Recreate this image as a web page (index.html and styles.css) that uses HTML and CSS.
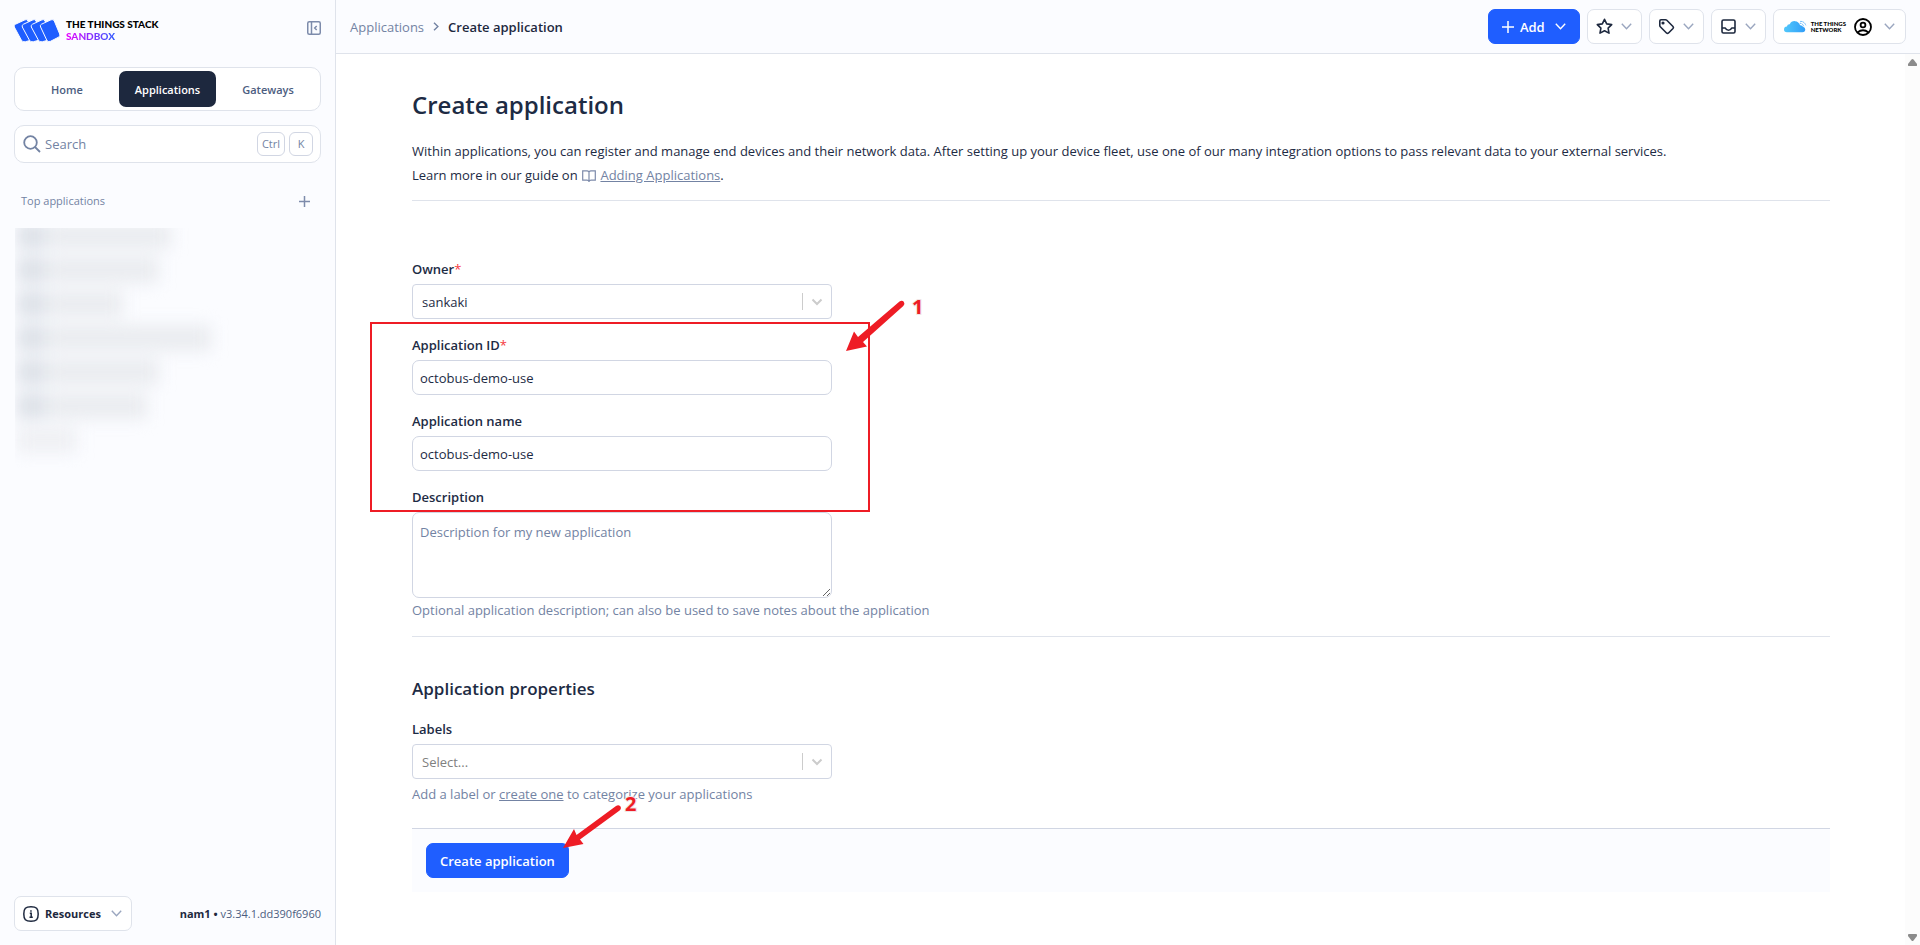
FILE: index.html
```html
<!DOCTYPE html>
<html lang="en">
<head>
    <meta charset="UTF-8">
    <meta name="viewport" content="width=device-width, initial-scale=1.0">
    <title>Create application - The Things Stack Sandbox</title>
    <link rel="stylesheet" href="styles.css">
</head>
<body>
<aside class="sidebar">
    <div class="sidebar-head">
        <a class="brand" href="#">
            <svg width="46" height="23" viewBox="0 0 46 23">
                <g fill="#1f5eff" stroke="#fbfcff" stroke-width="1">
                    <path d="M1.5 5.2 11 .8Q13 0 14 2L20.800 17.500Q21.500 19.500 19.500 20.500L11.500 22.700Q8.500 23.500 7.300 21L.3 8Q-.5 6.200 1.500 5.200Z"/>
                    <path d="M9.500 5.200 19 .8Q21 0 22 2L28.800 17.500Q29.500 19.500 27.500 20.500L19.500 22.700Q16.500 23.500 15.300 21L8.300 8Q7.500 6.200 9.500 5.200Z"/>
                    <path d="M18.500 5.200 28 .8Q30 0 31 2L37.800 17.500Q38.500 19.500 36.500 20.500L28.500 22.700Q25.500 23.500 24.300 21L17.300 8Q16.500 6.200 18.500 5.200Z"/>
                    <path d="M27.500 5.200 37 .8Q39.300 0 40.300 2L45.700 15Q46.500 17.200 44.500 18.200L36.500 22.300Q33.800 23.500 32.700 21L26.600 8Q25.500 6.200 27.500 5.200Z"/>
                </g>
            </svg>
            <span class="brand-text">
                <span>THE THINGS STACK</span>
                <span class="brand-plan">SANDBOX</span>
            </span>
        </a>
        <button class="icon-button" aria-label="Collapse sidebar">
            <svg width="14" height="14" viewBox="0 0 14 14" fill="none" stroke="#7d8bab" stroke-width="1.500">
                <rect x=".75" y=".75" width="12.500" height="12.500" rx="1.500"/>
                <path d="M4.500 1v12M9.700 5 7.700 7l2 2"/>
            </svg>
        </button>
    </div>

    <nav class="tabs">
        <a href="#">Home</a>
        <a href="#" class="active">Applications</a>
        <a href="#">Gateways</a>
    </nav>

    <div class="search">
        <svg width="18" height="18" viewBox="0 0 18 18" fill="none" stroke="#7383a3" stroke-width="1.800">
            <circle cx="7.500" cy="7.500" r="6.300"/>
            <path d="m12 12 5 5"/>
        </svg>
        <input type="search" placeholder="Search" aria-label="Search">
        <kbd>Ctrl</kbd>
        <kbd>K</kbd>
    </div>

    <div class="section-title">
        <span>Top applications</span>
        <button class="icon-button" aria-label="Add application">
            <svg width="11" height="11" viewBox="0 0 11 11" stroke="#7d8bab" stroke-width="1.500"><path d="M5.500 0v11M0 5.500h11"/></svg>
        </button>
    </div>

    <!-- application names are hidden -->
    <div class="top-apps">
        <div class="app-list">
            <div class="app-row"><i></i><b style="width: 122px"></b></div>
            <div class="app-row"><i></i><b style="width: 110px"></b></div>
            <div class="app-row"><i></i><b style="width: 74px"></b></div>
            <div class="app-row"><i></i><b style="width: 162px"></b></div>
            <div class="app-row"><i></i><b style="width: 110px"></b></div>
            <div class="app-row"><i></i><b style="width: 98px"></b></div>
            <div class="app-row more"><b style="width: 60px"></b></div>
        </div>
    </div>

    <div class="sidebar-foot">
        <button class="button">
            <svg width="16" height="16" viewBox="0 0 16 16" fill="none" stroke="#1d283e" stroke-width="1.500">
                <path d="M8 .8C13.500.8 15.200 2.500 15.200 8S13.500 15.200 8 15.200.8 13.500.8 8 2.500.8 8 .8Z"/>
                <path d="M6.800 7.300H8.200V11M6.500 11.200h3.300M7.200 4.900h1.500"/>
            </svg>
            <span>Resources</span>
            <svg class="chevron" width="11" height="7" viewBox="0 0 11 7"><path d="m.8.8 4.700 4.900L10.200.8"/></svg>
        </button>
        <p class="version"><strong>nam1 •</strong> v3.34.1.dd390f6960</p>
    </div>
</aside>

<div class="page">
    <header class="header">
        <nav class="breadcrumbs">
            <a href="#">Applications</a>
            <svg width="6" height="9" viewBox="0 0 6 9" fill="none" stroke="#7383a3" stroke-width="1.400"><path d="m1 .7 3.900 3.800L1 8.300"/></svg>
            <span>Create application</span>
        </nav>
        <div class="actions">
            <button class="button primary">
                <svg width="12" height="12" viewBox="0 0 12 12" stroke="#fff" stroke-width="1.500"><path d="M6 0v12M0 6h12"/></svg>
                <span>Add</span>
                <svg class="chevron" width="11" height="7" viewBox="0 0 11 7"><path d="m.8.8 4.700 4.900L10.200.8"/></svg>
            </button>
            <button class="button compact" aria-label="Bookmarks">
                <svg width="17" height="17" viewBox="0 0 17 17" fill="none" stroke="#1d283e" stroke-width="1.600" stroke-linejoin="round"><path d="m8.500 1.300 2.200 4.600 5 .7-3.600 3.500.9 5-4.500-2.400L4 15.100l.9-5L1.300 6.600l5-.7Z"/></svg>
                <svg class="chevron" width="11" height="7" viewBox="0 0 11 7"><path d="m.8.8 4.700 4.900L10.200.8"/></svg>
            </button>
            <button class="button compact" aria-label="Tags">
                <svg width="17" height="17" viewBox="0 0 17 17" fill="none" stroke="#1d283e" stroke-width="1.600" stroke-linejoin="round">
                    <path d="M1.800 3v4.500q0 .8.500 1.300l6.200 6.200q1 .9 2 0l4.500-4.500q.9-1 0-2L8.800 2.300q-.5-.5-1.300-.5H3Q1.800 1.800 1.800 3Z"/>
                    <circle cx="5" cy="5" r=".8" fill="#1d283e"/>
                </svg>
                <svg class="chevron" width="11" height="7" viewBox="0 0 11 7"><path d="m.8.8 4.700 4.900L10.200.8"/></svg>
            </button>
            <button class="button compact" aria-label="Inbox">
                <svg width="17" height="17" viewBox="0 0 17 17" fill="none" stroke="#1d283e" stroke-width="1.600" stroke-linejoin="round">
                    <rect x="2" y="2" width="13" height="13" rx="1.500"/>
                    <path d="M2 10h3.300q1 2.300 3.200 2.300t3.200-2.300H15"/>
                </svg>
                <svg class="chevron" width="11" height="7" viewBox="0 0 11 7"><path d="m.8.8 4.700 4.900L10.200.8"/></svg>
            </button>
            <button class="button compact profile" aria-label="Profile">
                <svg width="23" height="13" viewBox="0 0 24 13">
                    <defs>
                        <linearGradient id="cloud" x1="0" x2="1"><stop offset="0" stop-color="#52c8fb"/><stop offset="1" stop-color="#309df8"/></linearGradient>
                    </defs>
                    <path fill="url(#cloud)" d="M3 12.500Q0 12.200 0 9.500 0 6.800 3 6.500 3.500 4 6 4.200 7.500.7 11.500.9q4 .2 5.300 4.300 2.200-.2 3 1.600 2.400.4 2.400 2.900 0 2.600-3 2.800Z"/>
                    <path fill="none" stroke="#309df8" stroke-width=".9" stroke-dasharray="1.500 .7" d="M16.500 3.200q2.800-.3 4 3M17 1.200q4-.3 5.800 4"/>
                </svg>
                <span class="network-name">THE THINGS<br>NETWORK</span>
                <svg class="avatar" width="18" height="18" viewBox="0 0 18 18" fill="none" stroke="#000" stroke-width="1.800">
                    <circle cx="9" cy="9" r="8"/>
                    <circle cx="9" cy="7" r="2.400"/>
                    <path d="M3.500 14.500q5.500-4.500 11 0"/>
                </svg>
                <svg class="chevron" width="11" height="7" viewBox="0 0 11 7"><path d="m.8.8 4.700 4.900L10.200.8"/></svg>
            </button>
        </div>
    </header>

    <div class="scroll-area">
        <main class="content">
            <h1>Create application</h1>
            <p class="intro">
                Within applications, you can register and manage end devices and their network data. After setting up your device fleet, use one of our many integration options to pass relevant data to your external services.<br>
                Learn more in our guide on
                <svg width="14" height="12" viewBox="0 0 14 12" fill="none" stroke="#7d8bab" stroke-width="1.200"><path d="M7 2Q6.300.8 5 .8H.7v9.400H5q1.500 0 2 1.200.500-1.200 2-1.200h4.300V.8H9Q7.700.8 7 2Zm0 0v9"/></svg>
                <a href="#">Adding Applications</a>.
            </p>
            <hr>

            <form class="form">
                <div class="field">
                    <label for="owner">Owner<span class="required">*</span></label>
                    <div class="select">
                        <select id="owner">
                            <option>sankaki</option>
                        </select>
                        <span class="select-arrow"><svg width="12" height="8" viewBox="0 0 12 8"><path d="m1.500 1.500 4.500 4.500 4.500-4.500"/></svg></span>
                    </div>
                </div>
                <div class="field">
                    <label for="app-id">Application ID<span class="required">*</span></label>
                    <input type="text" id="app-id" value="octobus-demo-use">
                </div>
                <div class="field">
                    <label for="app-name">Application name</label>
                    <input type="text" id="app-name" value="octobus-demo-use">
                </div>
                <div class="field">
                    <label for="description">Description</label>
                    <textarea id="description" placeholder="Description for my new application"></textarea>
                    <p class="hint">Optional application description; can also be used to save notes about the application</p>
                </div>
                <hr>

                <h2>Application properties</h2>
                <div class="field labels">
                    <label for="labels">Labels</label>
                    <div class="select empty">
                        <select id="labels">
                            <option>Select...</option>
                        </select>
                        <span class="select-arrow"><svg width="12" height="8" viewBox="0 0 12 8"><path d="m1.500 1.500 4.500 4.500 4.500-4.500"/></svg></span>
                    </div>
                    <p class="hint">Add a label or <a href="#">create one</a> to categorize your applications</p>
                </div>

                <div class="submit-bar">
                    <button type="submit" class="button primary">Create application</button>
                </div>
            </form>

            <!-- steps drawn over the form -->
            <svg class="steps" width="560" height="560" viewBox="0 0 560 560">
                <rect x="11" y="34" width="498" height="188" fill="none" stroke="#ee1c25" stroke-width="2"/>
                <g fill="#ee1c25">
                    <path d="m486 62 8-19.500 4 5.500L539.500 12.500q2.500-1.500 4.300.3 1.500 2.200-.5 4.200L503 53l4 4.500Z"/>
                    <path d="m203 559 11-19 2.500 6L256 517q2.500-1.500 4.300.3 1.500 2.200-.7 4.200L220 550.500l3.500 4.500Z"/>
                    <text x="552" y="25">1</text>
                    <text x="265" y="522">2</text>
                </g>
            </svg>
        </main>
        <div class="scrollbar">
            <svg width="9" height="7" viewBox="0 0 9 7"><path d="M3.500.5Q4.500-.5 5.500.5L9 5q.5 2-1 2H1Q-.5 7 0 5Z"/></svg>
            <svg width="9" height="7" viewBox="0 0 9 7"><path d="M3.500 6.500q1 1 2 0L9 2q.5-2-1-2H1Q-.5 0 0 2Z"/></svg>
        </div>
    </div>
</div>
</body>
</html>
```
FILE: styles.css
```css
:root {
    --blue: #1f5eff;
    --dark: #1d283e;
    --text: #1d2b44;
    --muted: #7383a3;
    --panel: #fbfcff;
    --line: #dfe3eb;
    --input-line: #d1d6e3;
}

* {
    margin: 0;
    padding: 0;
    box-sizing: border-box;
}

body {
    display: flex;
    height: 100vh;
    overflow: hidden;
    background: #fff;
    color: var(--text);
    font-family: "Segoe UI", "Open Sans", "Noto Sans", sans-serif;
    font-size: 13px;
    line-height: 20px;
}

svg {
    flex-shrink: 0;
}

button, input, select, textarea {
    font: inherit;
    color: inherit;
}

a {
    color: var(--muted);
}

hr {
    border: none;
    border-top: 1px solid var(--line);
}

/* sidebar */
.sidebar {
    display: flex;
    flex-direction: column;
    flex-shrink: 0;
    width: 336px;
    padding: 14px;
    background: var(--panel);
    border-right: 1px solid var(--line);
}

.sidebar-head {
    display: flex;
    justify-content: space-between;
    align-items: center;
    height: 28px;
    margin-bottom: 25px;
}

.brand {
    display: flex;
    align-items: center;
    gap: 6px;
    margin-top: 4px;
    color: #000;
    text-decoration: none;
}

.brand-text {
    display: flex;
    flex-direction: column;
    font-family: Lato, sans-serif;
    font-size: 10px;
    font-weight: 900;
    line-height: 12px;
}

.brand-plan {
    align-self: flex-start;
    background: linear-gradient(90deg, #e800ff, #2f5bff);
    background-clip: text;
    -webkit-background-clip: text;
    color: transparent;
}

.icon-button {
    display: flex;
    background: none;
    border: none;
    cursor: pointer;
}

.tabs {
    display: grid;
    grid-template-columns: 1fr 97px 1fr;
    gap: 3px;
    height: 44px;
    padding: 3px;
    background: #fff;
    border: 1px solid var(--line);
    border-radius: 10px;
}

.tabs a {
    display: flex;
    align-items: center;
    justify-content: center;
    padding-top: 1px;
    border-radius: 7px;
    color: #4c5d80;
    font-size: 11px;
    font-weight: 600;
    text-decoration: none;
}

.tabs .active {
    background: var(--dark);
    color: #fff;
}

.search {
    display: flex;
    align-items: center;
    gap: 4px;
    height: 38px;
    margin-top: 14px;
    padding: 0 7px 0 8px;
    background: #fff;
    border: 1px solid var(--line);
    border-radius: 10px;
}

.search input {
    flex: 1;
    min-width: 0;
    background: none;
    border: none;
    outline: none;
}

::placeholder {
    color: var(--muted);
    opacity: 1;
}

kbd {
    min-width: 24px;
    padding: 0 4px;
    border: 1px solid var(--input-line);
    border-radius: 6px;
    color: var(--muted);
    font-family: inherit;
    font-size: 11px;
    line-height: 22px;
    text-align: center;
}

.section-title {
    display: flex;
    justify-content: space-between;
    align-items: center;
    margin: 28px 11px 17px 7px;
    color: var(--muted);
    font-size: 11px;
}

.top-apps {
    overflow: hidden;
    height: 240px;
    margin-left: 1px;
}

.app-list {
    margin-top: -9px;
    filter: blur(8px);
}

.app-row {
    display: flex;
    align-items: center;
    gap: 2px;
    height: 34px;
    padding-left: 2px;
}

.app-row i {
    width: 30px;
    height: 26px;
    background: #dde1e8;
}

.app-row b {
    height: 26px;
    background: #eaecf0;
}

.app-row.more b {
    background: #eff0f4;
}

.sidebar-foot {
    display: flex;
    justify-content: space-between;
    align-items: center;
    margin-top: auto;
}

.version {
    color: #4c5d80;
    font-size: 11px;
}

.version strong {
    color: var(--dark);
}

/* buttons */
.button {
    display: flex;
    align-items: center;
    gap: 6px;
    height: 35px;
    padding: 0 9px 0 8px;
    background: #fff;
    border: 1px solid var(--line);
    border-radius: 7px;
    color: var(--dark);
    font-size: 11px;
    font-weight: 700;
    cursor: pointer;
}

.button .chevron {
    margin-left: 4px;
}

.button.primary {
    padding: 0 13px;
    background: var(--blue);
    border-color: var(--blue);
    color: #fff;
    font-size: 13px;
    font-weight: 600;
}

.button.compact {
    gap: 4px;
}

.chevron {
    fill: none;
    stroke: #9aa6bf;
    stroke-width: 1.4px;
}

.primary .chevron {
    stroke: #fff;
}

/* header */
.page {
    display: flex;
    flex-direction: column;
    flex: 1;
    min-width: 0;
}

.header {
    display: flex;
    justify-content: space-between;
    align-items: center;
    height: 54px;
    padding: 0 14px;
    background: var(--panel);
    border-bottom: 1px solid var(--line);
}

.breadcrumbs {
    display: flex;
    align-items: center;
    gap: 9px;
}

.breadcrumbs a {
    text-decoration: none;
}

.breadcrumbs span {
    color: var(--dark);
    font-weight: 600;
}

.actions {
    display: flex;
    gap: 7px;
}

.button.profile {
    padding: 0 10px;
}

.network-name {
    font-family: Lato, sans-serif;
    font-size: 6px;
    font-weight: 900;
    line-height: 6px;
    text-align: left;
    color: #000;
}

.avatar {
    margin: 0 4px;
}

/* content */
.scroll-area {
    display: flex;
    flex: 1;
    min-height: 0;
}

.content {
    position: relative;
    flex: 1;
    padding: 35px 75px 0 76px;
}

h1 {
    margin-bottom: 18px;
    font-size: 24px;
    font-weight: 600;
    line-height: 32px;
}

.intro {
    margin-bottom: 13px;
    line-height: 24px;
}

.intro svg {
    margin: 0 1px;
    vertical-align: -2px;
}

.form {
    margin-top: 58px;
}

.field {
    margin-bottom: 16px;
}

label {
    display: block;
    margin-bottom: 5px;
    font-weight: 600;
}

.required {
    color: #f5383d;
    font-weight: 400;
}

.field input, .field select, .field textarea {
    display: block;
    width: 420px;
    height: 35px;
    padding: 0 7px;
    background: #fff;
    border: 1px solid var(--input-line);
    border-radius: 7px;
    outline: none;
}

.field textarea {
    height: 86px;
    padding-top: 9px;
}

.select {
    position: relative;
    width: 420px;
}

.field select {
    appearance: none;
    padding: 0 9px;
    border-radius: 4px;
}

.select.empty select {
    color: #808080;
}

.select-arrow {
    position: absolute;
    top: 9px;
    right: 1px;
    display: flex;
    align-items: center;
    justify-content: center;
    width: 29px;
    height: 17px;
    border-left: 1px solid #ccc;
    pointer-events: none;
}

.select-arrow path {
    fill: none;
    stroke: #ccc;
    stroke-width: 2px;
}

.hint {
    margin-top: 2px;
    color: var(--muted);
}

h2 {
    margin: 40px 0 18px;
    font-size: 17px;
    font-weight: 600;
    line-height: 24px;
}

.labels {
    margin-bottom: 24px;
}

.labels .hint {
    margin-top: 5px;
}

.submit-bar {
    padding: 14px;
    background: var(--panel);
    border-top: 1px solid var(--input-line);
}

.steps {
    position: absolute;
    top: 235px;
    left: 24px;
    overflow: visible;
    pointer-events: none;
}

.steps text {
    font-family: "Open Sans", sans-serif;
    font-size: 20px;
    font-weight: 700;
    paint-order: stroke;
    stroke: #f0e4e4;
    stroke-width: 2px;
}

.scrollbar {
    display: flex;
    flex-direction: column;
    justify-content: space-between;
    align-items: center;
    width: 15px;
    padding: 5px 0 4px;
    background: #fcfcfc;
    fill: #8b8b8b;
}
```
